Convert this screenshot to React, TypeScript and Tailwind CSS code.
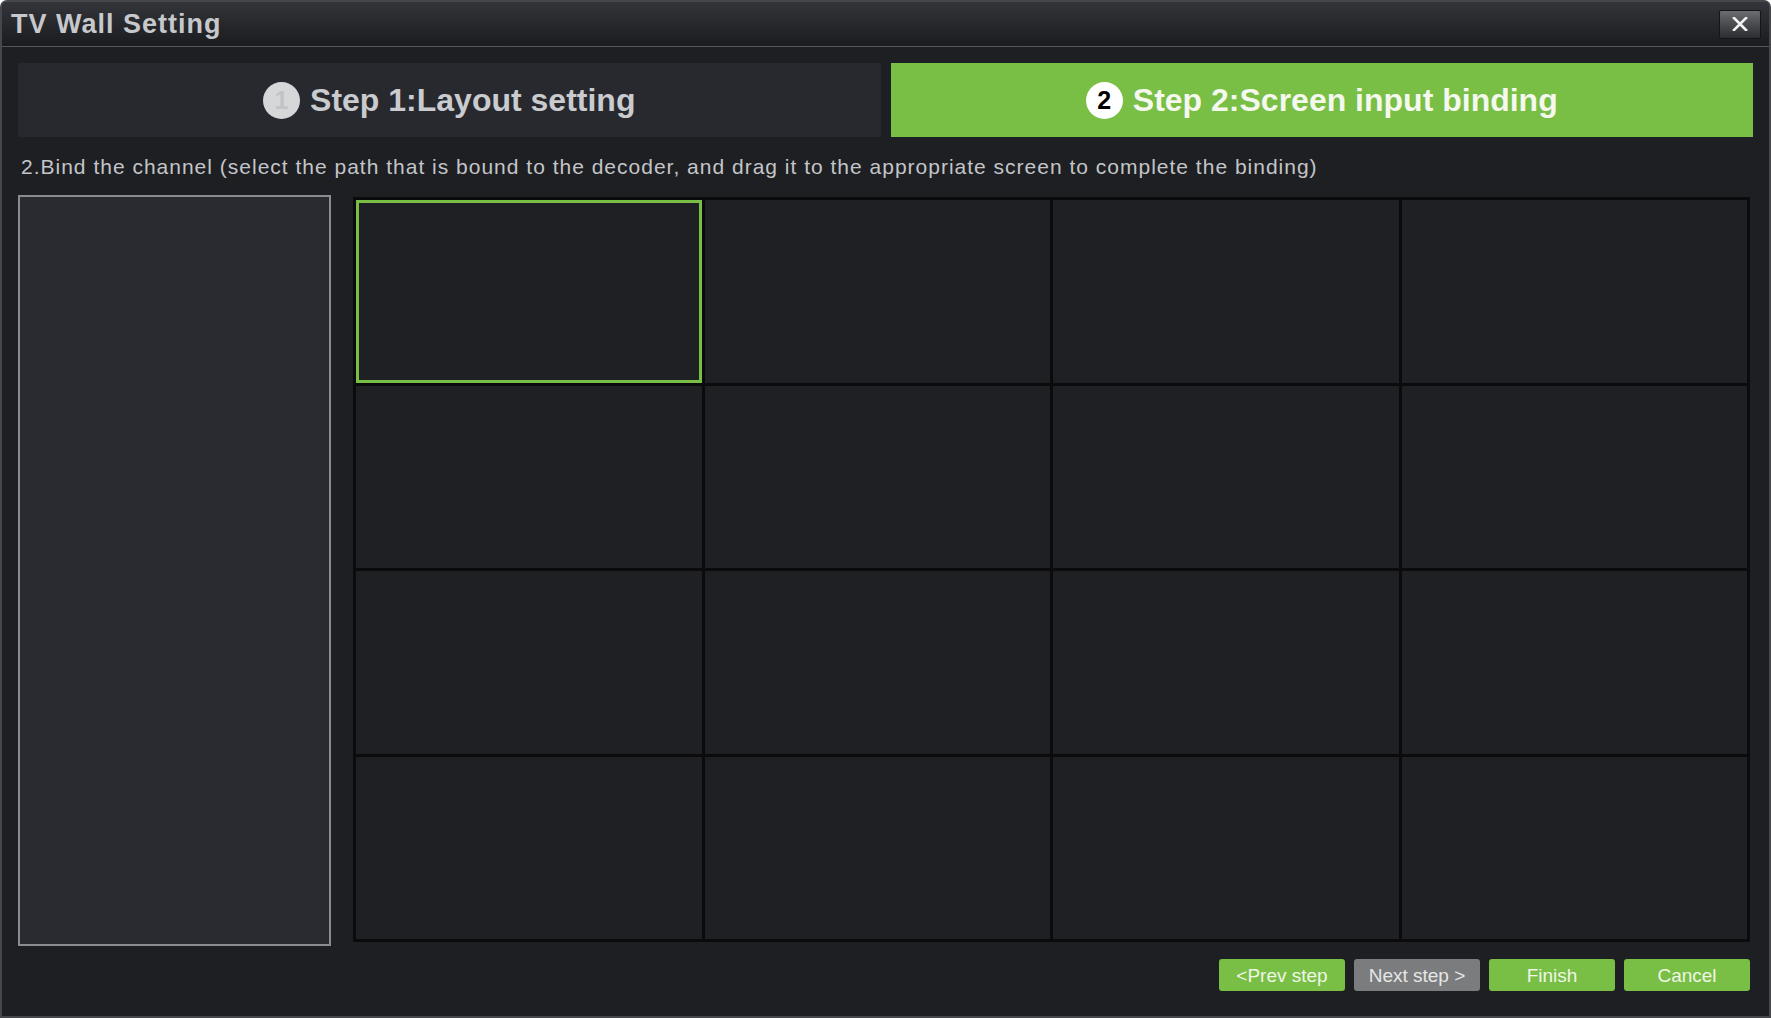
import React from "react";

const cells = Array.from({ length: 16 }, (_, i) => i);

function StepTab({
  num,
  label,
  active,
}: {
  num: string;
  label: string;
  active: boolean;
}) {
  return (
    <div
      className={
        "flex-1 h-[74px] flex items-center justify-center gap-[10px] " +
        (active ? "bg-[#79be45]" : "bg-[#28292e]")
      }
    >
      <div
        className={
          "w-[37px] h-[37px] rounded-full flex items-center justify-center text-[25px] font-bold leading-none " +
          (active ? "bg-white text-black" : "bg-[#d6d7d9] text-[#c2c3c5]")
        }
      >
        {num}
      </div>
      <span
        className={
          "text-[32px] font-bold leading-none " +
          (active ? "text-[#f4f8ee]" : "text-[#c9cbcf]")
        }
      >
        {label}
      </span>
    </div>
  );
}

function Btn({ children, gray }: { children: React.ReactNode; gray?: boolean }) {
  return (
    <button
      className={
        "w-[126px] h-[32px] rounded-[3px] text-[19px] leading-none " +
        (gray ? "bg-[#7b7c7e] text-[#e6e6e6]" : "bg-[#79be45] text-[#eef6e6]")
      }
    >
      {children}
    </button>
  );
}

export default function App() {
  return (
    <div className="w-[1771px] h-[1018px] bg-[#1e1f23] border-2 border-[#46474b] rounded-t-[7px] flex flex-col overflow-hidden font-['Liberation_Sans',Arial,sans-serif]">
      {/* title bar */}
      <div className="h-[45px] shrink-0 bg-gradient-to-b from-[#34353a] to-[#1b1c1f] border-b border-[#55565b] flex items-center justify-between pl-[9px] pr-[8px]">
        <span className="text-[27px] font-bold tracking-[1px] text-[#c6c8cb] leading-none mt-[1px]">
          TV Wall Setting
        </span>
        <button className="w-[42px] h-[29px] rounded-[2px] border border-[#151518] bg-gradient-to-b from-[#6c6d70] via-[#4a4b4e] to-[#2c2d30] flex items-center justify-center">
          <svg width="16" height="14" viewBox="0 0 16 14">
            <path d="M2 1 L14 13 M14 1 L2 13" stroke="#f2f2f2" strokeWidth="2.6" strokeLinecap="square" />
          </svg>
        </button>
      </div>

      <div className="flex flex-col px-[16px] pt-[16px]">
        {/* steps */}
        <div className="flex gap-[10px]">
          <StepTab num="1" label="Step 1:Layout setting" active={false} />
          <StepTab num="2" label="Step 2:Screen input binding" active />
        </div>

        {/* hint */}
        <div className="mt-[18px] h-[24px] pl-[3px] text-[21px] tracking-[1px] leading-[24px] text-[#c3c5c8] whitespace-nowrap">
          2.Bind the channel (select the path that is bound to the decoder, and drag it to the appropriate screen to complete the binding)
        </div>

        {/* channel list + screen grid */}
        <div className="mt-[16px] flex items-start">
          <div className="w-[313px] h-[751px] shrink-0 bg-[#2a2b30] border-2 border-[#8a8c92]" />
          <div className="ml-[22px] mt-[2px] w-[1397px] h-[745px] bg-[#0b0b0d] p-[3px] grid grid-cols-4 grid-rows-4 gap-[3px]">
            {cells.map((i) => (
              <div
                key={i}
                className={
                  "bg-[#1f2024] " + (i === 0 ? "border-[3px] border-[#79be45]" : "")
                }
              />
            ))}
          </div>
        </div>

        {/* actions */}
        <div className="mt-[13px] flex justify-end gap-[9px] pr-[3px]">
          <Btn>&lt;Prev step</Btn>
          <Btn gray>Next step &gt;</Btn>
          <Btn>Finish</Btn>
          <Btn>Cancel</Btn>
        </div>
      </div>
    </div>
  );
}
